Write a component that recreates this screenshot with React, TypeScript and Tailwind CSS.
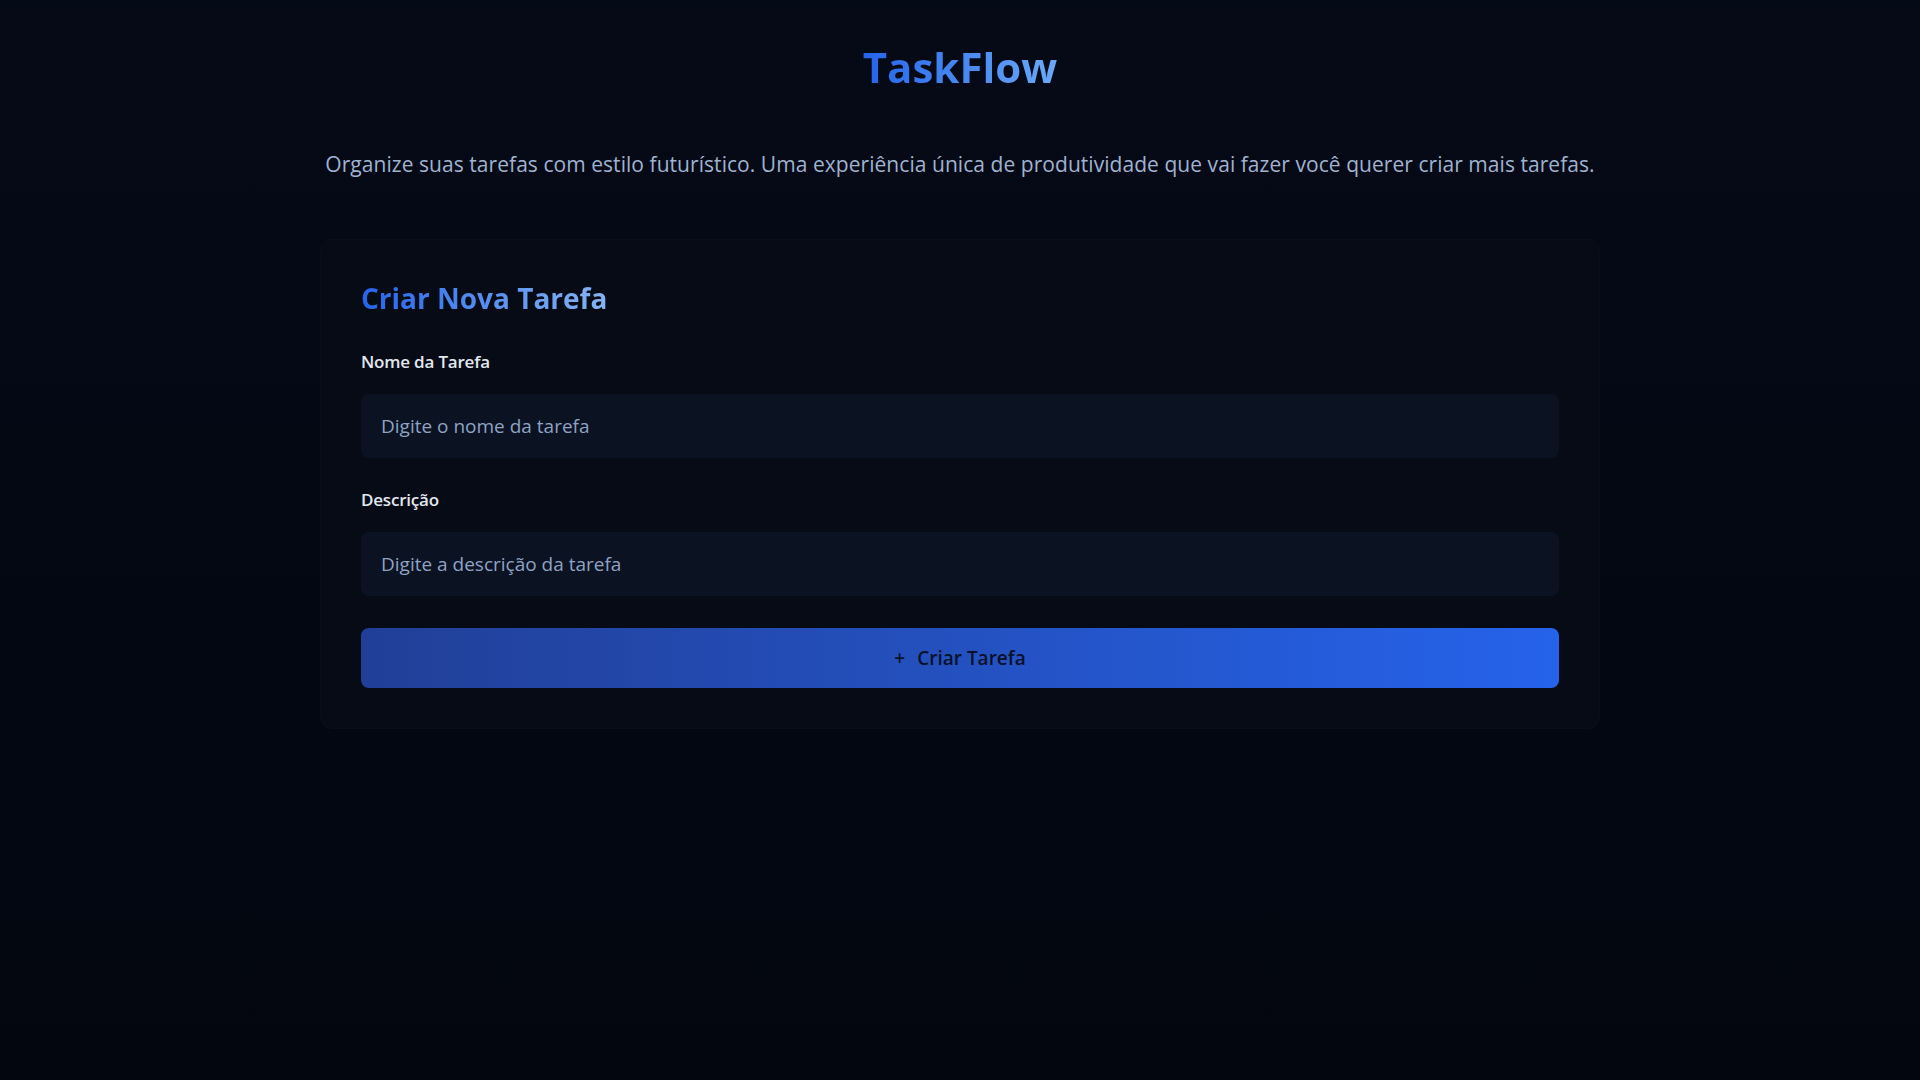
const font = { fontFamily: '"Open Sans", "Noto Sans", sans-serif' }

const Field = (props: { label: string; placeholder: string }) => {
    return (
        <div className="flex flex-col">
            <label className="text-[17px] leading-6 font-semibold text-slate-200 mb-5 tracking-[-0.2px]">{props.label}</label>
            <input
                type="text"
                placeholder={props.placeholder}
                className="h-16 w-full rounded-lg bg-[#0b1222] px-5 text-[19px] text-slate-200 placeholder:text-[#8ea3c4] outline-none"
            />
        </div>
    )
}

export default function App() {
    return (
        <div className="min-h-screen w-full bg-gradient-to-b from-[#050a17] to-[#03060f]" style={font}>
            <div className="flex flex-col items-center pt-[46px]">
                <h1 className="text-[42px] font-bold leading-none bg-gradient-to-r from-[#2563eb] to-[#6aa8f7] bg-clip-text text-transparent">
                    TaskFlow
                </h1>
                <p className="mt-[62px] text-[21px] leading-7 text-[#9fb3d1] tracking-[0.05px]">
                    Organize suas tarefas com estilo futurístico. Uma experiência única de produtividade que vai fazer você querer criar mais tarefas.
                </p>

                <div className="mt-[61px] w-[1280px] rounded-xl bg-[#070b16] border border-[#090e1b] p-10">
                    <h2 className="text-[28px] leading-9 font-bold bg-gradient-to-r from-[#2563eb] to-[#86b4f2] bg-clip-text text-transparent w-fit mb-[34px]">
                        Criar Nova Tarefa
                    </h2>
                    <div className="flex flex-col gap-[30px]">
                        <Field label="Nome da Tarefa" placeholder="Digite o nome da tarefa" />
                        <Field label="Descrição" placeholder="Digite a descrição da tarefa" />
                        <button className="mt-[2px] h-[60px] w-full rounded-lg bg-gradient-to-r from-[#213f97] to-[#2563eb] text-[19px] font-semibold text-[#0a1128] flex items-center justify-center gap-3">
                            <span>+</span>
                            <span>Criar Tarefa</span>
                        </button>
                    </div>
                </div>
            </div>
        </div>
    )
}
